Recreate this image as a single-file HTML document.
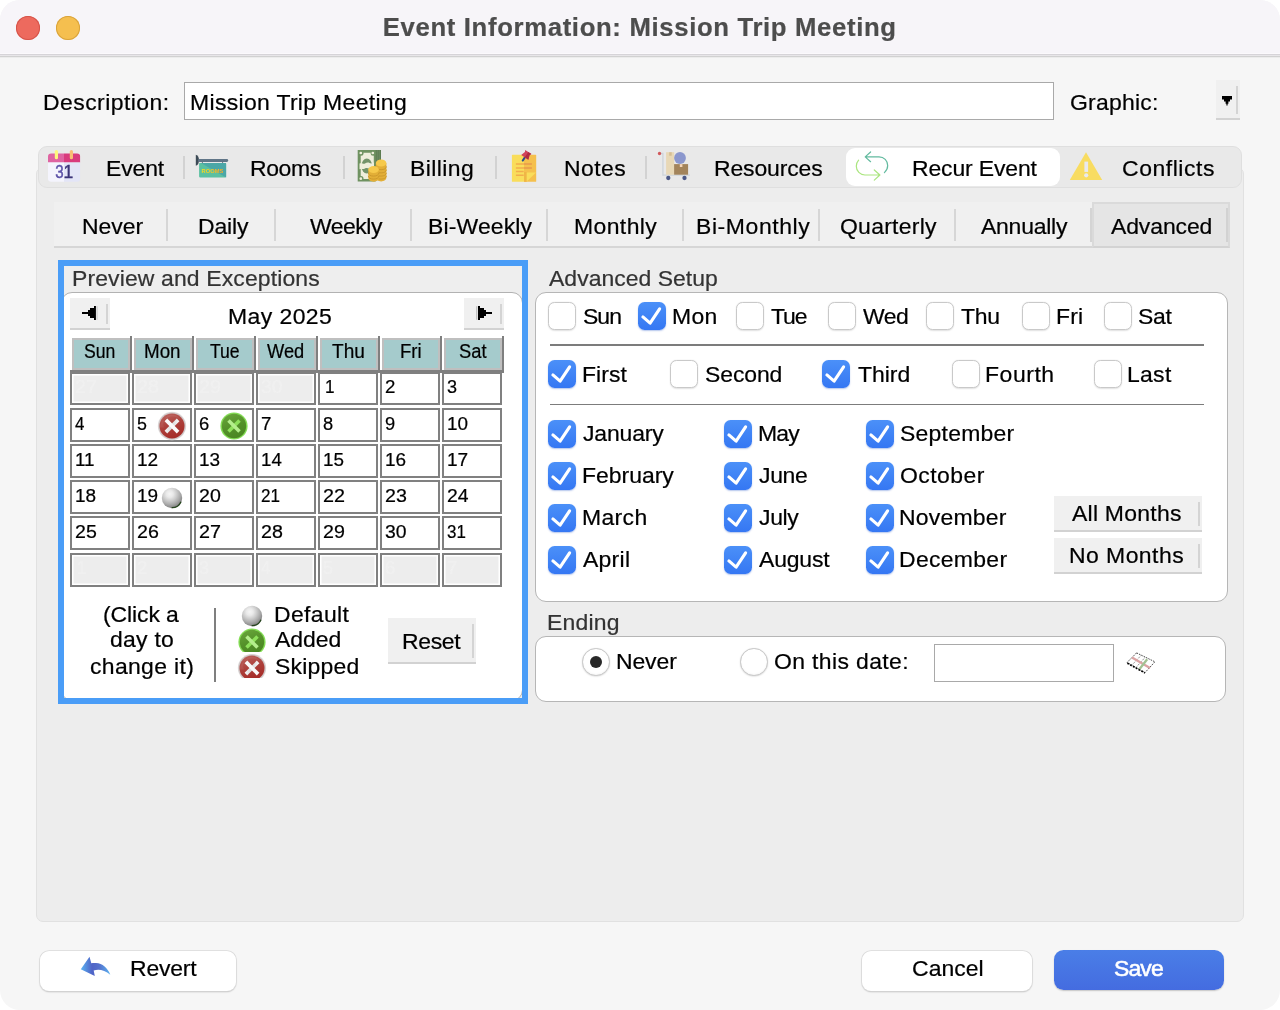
<!DOCTYPE html>
<html lang="en"><head><meta charset="utf-8"><title>Event Information: Mission Trip Meeting</title>
<style>
html,body{margin:0;padding:0;background:#fff;}
body{width:1280px;height:1010px;overflow:hidden;font-family:"Liberation Sans", sans-serif;}
#win{position:absolute;left:0;top:0;width:1280px;height:1010px;background:#f6f6f6;border-radius:20px;overflow:hidden;}
#win div,#win svg,#win span{position:absolute;}
#titlebar{left:0;top:0;width:1280px;height:58px;background:linear-gradient(#f7f5f9 0,#f7f5f9 53.5px,#fbf9fc 53.5px,#fbf9fc 54px,#d6d4d8 54px,#d6d4d8 55px,#e8e6e9 55px,#e8e6e9 56px,#d1d1d1 56px,#d1d1d1 57px,#ececec 57px,#ececec 58px);}
#txt{left:0;top:0;width:1280px;height:1010px;will-change:transform;}
.t{white-space:pre;line-height:1;color:#000;-webkit-text-stroke:0.22px currentColor;transform-origin:0 50%;}
.cb{width:27.5px;height:27.5px;box-sizing:border-box;border-radius:6.5px;background:#fff;border:1px solid #c9c9c9;box-shadow:0 0.5px 1.5px rgba(0,0,0,0.12);}
.cb.on{border:none;background:linear-gradient(#4b90f8,#3577f3);box-shadow:0 1px 1.5px rgba(40,90,200,0.35);}
.cb svg{left:0;top:0;}
.rb{width:27.6px;height:27.6px;box-sizing:border-box;border-radius:50%;background:#fff;border:1px solid #c6c6c6;box-shadow:0 0.5px 1.5px rgba(0,0,0,0.15), inset 0 -1px 2px rgba(0,0,0,0.04);}
.rb i{position:absolute;left:6.7px;top:6.8px;width:12.2px;height:12.2px;border-radius:50%;background:#282828;}
</style></head>
<body>
<div id="win">
<div id="titlebar"></div>
<div style="left:16px;top:16px;width:24.00px;height:24.00px;border-radius:50%;background:#ed6a5e;box-shadow:inset 0 0 0 1px #d5544a;"></div>
<div style="left:56px;top:16px;width:24.00px;height:24.00px;border-radius:50%;background:#f5bf4f;box-shadow:inset 0 0 0 1px #d9a33c;"></div>
<div style="left:184px;top:82px;width:870.00px;height:38.00px;background:#fff;border:1px solid #a9a9a9;box-sizing:border-box;"></div>
<div style="left:1216px;top:80px;width:24.00px;height:40.00px;background:#f0f0f0;border-bottom:2px solid #d2d2d2;box-sizing:border-box;"></div><div style="left:1236px;top:86px;width:2.00px;height:28.00px;background:#d4d4d4;"></div>
<div style="left:36px;top:167px;width:1207.50px;height:754.50px;background:#ededed;border:1px solid #e1e1e1;border-radius:7px;box-sizing:border-box;"></div>
<div style="left:38px;top:146px;width:1204.00px;height:41.50px;background:#e9e9e9;border:1px solid #dfdfdf;border-radius:9px;box-sizing:border-box;"></div>
<div style="left:846px;top:148px;width:214.00px;height:38.00px;background:#fff;border-radius:9px;"></div>
<div style="left:183.25px;top:155.5px;width:1.50px;height:23.00px;background:#d2d2d2;"></div>
<div style="left:343.25px;top:155.5px;width:1.50px;height:23.00px;background:#d2d2d2;"></div>
<div style="left:495.25px;top:155.5px;width:1.50px;height:23.00px;background:#d2d2d2;"></div>
<div style="left:645.25px;top:155.5px;width:1.50px;height:23.00px;background:#d2d2d2;"></div>
<div style="left:54px;top:201.5px;width:1176.00px;height:46.00px;background:#f0f0f0;border-bottom:2px solid #d6d6d6;box-sizing:border-box;"></div>
<div style="left:166.25px;top:208.5px;width:1.50px;height:32.50px;background:#d6d6d6;"></div>
<div style="left:274.25px;top:208.5px;width:1.50px;height:32.50px;background:#d6d6d6;"></div>
<div style="left:410.25px;top:208.5px;width:1.50px;height:32.50px;background:#d6d6d6;"></div>
<div style="left:546.25px;top:208.5px;width:1.50px;height:32.50px;background:#d6d6d6;"></div>
<div style="left:682.25px;top:208.5px;width:1.50px;height:32.50px;background:#d6d6d6;"></div>
<div style="left:818.25px;top:208.5px;width:1.50px;height:32.50px;background:#d6d6d6;"></div>
<div style="left:954.25px;top:208.5px;width:1.50px;height:32.50px;background:#d6d6d6;"></div>
<div style="left:1092.3px;top:202px;width:137.40px;height:45.60px;background:#e5e5e5;border:2px solid #dadada;border-bottom:2px solid #d3d3d3;box-sizing:border-box;"></div>
<div style="left:1090.2px;top:208.2px;width:2.00px;height:33.60px;background:#d4d4d4;"></div>
<div style="left:1226px;top:208.2px;width:2.00px;height:33.60px;background:#d2d2d2;"></div>
<div style="left:58px;top:260px;width:470.00px;height:444.00px;background:#eeeeee;"></div>
<div style="left:61px;top:292px;width:462.00px;height:408.50px;background:#fff;border:1px solid #b2b2b2;border-radius:11px;box-sizing:border-box;"></div>
<div style="left:58px;top:260px;width:470.00px;height:444.00px;border:6px solid #4a9df7;box-sizing:border-box;"></div>
<div style="left:70px;top:298px;width:40.00px;height:31.50px;background:#f0f0f0;border-bottom:2px solid #d2d2d2;box-sizing:border-box;"></div><div style="left:106px;top:304px;width:2.00px;height:19.50px;background:#d4d4d4;"></div>
<div style="left:464px;top:298px;width:40.00px;height:31.50px;background:#f0f0f0;border-bottom:2px solid #d2d2d2;box-sizing:border-box;"></div><div style="left:500px;top:304px;width:2.00px;height:19.50px;background:#d4d4d4;"></div>
<div style="left:72px;top:338px;width:58.00px;height:32.00px;background:#a5cbcc;border:2px solid #bfbfbf;box-sizing:border-box;"></div>
<div style="left:130px;top:336px;width:2.00px;height:35.00px;background:#7f7f7f;"></div>
<div style="left:134px;top:338px;width:58.00px;height:32.00px;background:#a5cbcc;border:2px solid #bfbfbf;box-sizing:border-box;"></div>
<div style="left:192px;top:336px;width:2.00px;height:35.00px;background:#7f7f7f;"></div>
<div style="left:196px;top:338px;width:58.00px;height:32.00px;background:#a5cbcc;border:2px solid #bfbfbf;box-sizing:border-box;"></div>
<div style="left:254px;top:336px;width:2.00px;height:35.00px;background:#7f7f7f;"></div>
<div style="left:258px;top:338px;width:58.00px;height:32.00px;background:#a5cbcc;border:2px solid #bfbfbf;box-sizing:border-box;"></div>
<div style="left:316px;top:336px;width:2.00px;height:35.00px;background:#7f7f7f;"></div>
<div style="left:320px;top:338px;width:58.00px;height:32.00px;background:#a5cbcc;border:2px solid #bfbfbf;box-sizing:border-box;"></div>
<div style="left:378px;top:336px;width:2.00px;height:35.00px;background:#7f7f7f;"></div>
<div style="left:382px;top:338px;width:58.00px;height:32.00px;background:#a5cbcc;border:2px solid #bfbfbf;box-sizing:border-box;"></div>
<div style="left:440px;top:336px;width:2.00px;height:35.00px;background:#7f7f7f;"></div>
<div style="left:444px;top:338px;width:58.00px;height:32.00px;background:#a5cbcc;border:2px solid #bfbfbf;box-sizing:border-box;"></div>
<div style="left:502px;top:336px;width:2.00px;height:35.00px;background:#7f7f7f;"></div>
<div style="left:70.3px;top:370px;width:433.70px;height:2.50px;background:#7f7f7f;"></div>
<div style="left:70.3px;top:371.8px;width:59.60px;height:33.60px;background:#ededed;border:2px solid #808080;box-shadow:inset 0 0 0 1.5px #fff;box-sizing:border-box;"></div>
<div style="left:132.3px;top:371.8px;width:59.60px;height:33.60px;background:#ededed;border:2px solid #808080;box-shadow:inset 0 0 0 1.5px #fff;box-sizing:border-box;"></div>
<div style="left:194.3px;top:371.8px;width:59.60px;height:33.60px;background:#ededed;border:2px solid #808080;box-shadow:inset 0 0 0 1.5px #fff;box-sizing:border-box;"></div>
<div style="left:256.3px;top:371.8px;width:59.60px;height:33.60px;background:#ededed;border:2px solid #808080;box-shadow:inset 0 0 0 1.5px #fff;box-sizing:border-box;"></div>
<div style="left:318.3px;top:371.8px;width:59.60px;height:33.60px;background:#fff;border:2px solid #808080;box-sizing:border-box;"></div>
<div style="left:380.3px;top:371.8px;width:59.60px;height:33.60px;background:#fff;border:2px solid #808080;box-sizing:border-box;"></div>
<div style="left:442.3px;top:371.8px;width:59.60px;height:33.60px;background:#fff;border:2px solid #808080;box-sizing:border-box;"></div>
<div style="left:70.3px;top:408.2px;width:59.60px;height:33.60px;background:#fff;border:2px solid #808080;box-sizing:border-box;"></div>
<div style="left:132.3px;top:408.2px;width:59.60px;height:33.60px;background:#fff;border:2px solid #808080;box-sizing:border-box;"></div>
<div style="left:194.3px;top:408.2px;width:59.60px;height:33.60px;background:#fff;border:2px solid #808080;box-sizing:border-box;"></div>
<div style="left:256.3px;top:408.2px;width:59.60px;height:33.60px;background:#fff;border:2px solid #808080;box-sizing:border-box;"></div>
<div style="left:318.3px;top:408.2px;width:59.60px;height:33.60px;background:#fff;border:2px solid #808080;box-sizing:border-box;"></div>
<div style="left:380.3px;top:408.2px;width:59.60px;height:33.60px;background:#fff;border:2px solid #808080;box-sizing:border-box;"></div>
<div style="left:442.3px;top:408.2px;width:59.60px;height:33.60px;background:#fff;border:2px solid #808080;box-sizing:border-box;"></div>
<div style="left:70.3px;top:444.2px;width:59.60px;height:33.60px;background:#fff;border:2px solid #808080;box-sizing:border-box;"></div>
<div style="left:132.3px;top:444.2px;width:59.60px;height:33.60px;background:#fff;border:2px solid #808080;box-sizing:border-box;"></div>
<div style="left:194.3px;top:444.2px;width:59.60px;height:33.60px;background:#fff;border:2px solid #808080;box-sizing:border-box;"></div>
<div style="left:256.3px;top:444.2px;width:59.60px;height:33.60px;background:#fff;border:2px solid #808080;box-sizing:border-box;"></div>
<div style="left:318.3px;top:444.2px;width:59.60px;height:33.60px;background:#fff;border:2px solid #808080;box-sizing:border-box;"></div>
<div style="left:380.3px;top:444.2px;width:59.60px;height:33.60px;background:#fff;border:2px solid #808080;box-sizing:border-box;"></div>
<div style="left:442.3px;top:444.2px;width:59.60px;height:33.60px;background:#fff;border:2px solid #808080;box-sizing:border-box;"></div>
<div style="left:70.3px;top:480.3px;width:59.60px;height:33.60px;background:#fff;border:2px solid #808080;box-sizing:border-box;"></div>
<div style="left:132.3px;top:480.3px;width:59.60px;height:33.60px;background:#fff;border:2px solid #808080;box-sizing:border-box;"></div>
<div style="left:194.3px;top:480.3px;width:59.60px;height:33.60px;background:#fff;border:2px solid #808080;box-sizing:border-box;"></div>
<div style="left:256.3px;top:480.3px;width:59.60px;height:33.60px;background:#fff;border:2px solid #808080;box-sizing:border-box;"></div>
<div style="left:318.3px;top:480.3px;width:59.60px;height:33.60px;background:#fff;border:2px solid #808080;box-sizing:border-box;"></div>
<div style="left:380.3px;top:480.3px;width:59.60px;height:33.60px;background:#fff;border:2px solid #808080;box-sizing:border-box;"></div>
<div style="left:442.3px;top:480.3px;width:59.60px;height:33.60px;background:#fff;border:2px solid #808080;box-sizing:border-box;"></div>
<div style="left:70.3px;top:516.3px;width:59.60px;height:33.60px;background:#fff;border:2px solid #808080;box-sizing:border-box;"></div>
<div style="left:132.3px;top:516.3px;width:59.60px;height:33.60px;background:#fff;border:2px solid #808080;box-sizing:border-box;"></div>
<div style="left:194.3px;top:516.3px;width:59.60px;height:33.60px;background:#fff;border:2px solid #808080;box-sizing:border-box;"></div>
<div style="left:256.3px;top:516.3px;width:59.60px;height:33.60px;background:#fff;border:2px solid #808080;box-sizing:border-box;"></div>
<div style="left:318.3px;top:516.3px;width:59.60px;height:33.60px;background:#fff;border:2px solid #808080;box-sizing:border-box;"></div>
<div style="left:380.3px;top:516.3px;width:59.60px;height:33.60px;background:#fff;border:2px solid #808080;box-sizing:border-box;"></div>
<div style="left:442.3px;top:516.3px;width:59.60px;height:33.60px;background:#fff;border:2px solid #808080;box-sizing:border-box;"></div>
<div style="left:70.3px;top:552.6px;width:59.60px;height:34.60px;background:#ededed;border:2px solid #808080;box-shadow:inset 0 0 0 1.5px #fff;box-sizing:border-box;"></div>
<div style="left:132.3px;top:552.6px;width:59.60px;height:34.60px;background:#ededed;border:2px solid #808080;box-shadow:inset 0 0 0 1.5px #fff;box-sizing:border-box;"></div>
<div style="left:194.3px;top:552.6px;width:59.60px;height:34.60px;background:#ededed;border:2px solid #808080;box-shadow:inset 0 0 0 1.5px #fff;box-sizing:border-box;"></div>
<div style="left:256.3px;top:552.6px;width:59.60px;height:34.60px;background:#ededed;border:2px solid #808080;box-shadow:inset 0 0 0 1.5px #fff;box-sizing:border-box;"></div>
<div style="left:318.3px;top:552.6px;width:59.60px;height:34.60px;background:#ededed;border:2px solid #808080;box-shadow:inset 0 0 0 1.5px #fff;box-sizing:border-box;"></div>
<div style="left:380.3px;top:552.6px;width:59.60px;height:34.60px;background:#ededed;border:2px solid #808080;box-shadow:inset 0 0 0 1.5px #fff;box-sizing:border-box;"></div>
<div style="left:442.3px;top:552.6px;width:59.60px;height:34.60px;background:#ededed;border:2px solid #808080;box-shadow:inset 0 0 0 1.5px #fff;box-sizing:border-box;"></div>
<svg style="left:157.30px;top:411.30px;" width="30" height="30" viewBox="-15 -15 30 30"><defs><linearGradient id="rg1" x1="0.2" y1="0" x2="0.6" y2="1"><stop offset="0" stop-color="#bb625d"/><stop offset="0.5" stop-color="#ac3f3a"/><stop offset="1" stop-color="#a62b27"/></linearGradient><linearGradient id="rx1" x1="0" y1="0" x2="1" y2="0"><stop offset="0" stop-color="#f2f2f2"/><stop offset="0.5" stop-color="#d6d6d6"/><stop offset="1" stop-color="#f6f6f6"/></linearGradient></defs><circle r="14.200" fill="#e4e0e0"/><circle r="13.600" fill="#cdc5c5"/><circle r="12.5" fill="url(#rg1)"/><path d="M-8 1.500A8 8 0 0 1 8.500 -6A12.5 12.500 0 0 0 -12.400 1.500Z" fill="#fff" opacity="0.060"/><path d="M6.100 -6.100L-6.100 6.100" stroke="url(#rx1)" stroke-width="3.700" fill="none"/><path d="M-6.100 -6.100L6.100 6.100" stroke="#fafafa" stroke-width="3.700" fill="none"/></svg>
<svg style="left:218.90px;top:410.80px;" width="30" height="30" viewBox="-15 -15 30 30"><defs><linearGradient id="gg2" x1="0.2" y1="0" x2="0.6" y2="1"><stop offset="0" stop-color="#68a53a"/><stop offset="0.55" stop-color="#539029"/><stop offset="1" stop-color="#4a8722"/></linearGradient></defs><circle r="13.600" fill="#84dd55"/><circle r="12.200" fill="url(#gg2)"/><path d="M5.500 -5.500L-5.500 5.500" stroke="#8ee05b" stroke-width="3.500" fill="none"/><path d="M-5.500 -5.500L5.500 5.500" stroke="#b4ee8c" stroke-width="3.500" fill="none"/></svg>
<svg style="left:156.55px;top:483.15px;" width="30" height="30" viewBox="-15 -15 30 30"><defs><radialGradient id="dg3" cx="0.390" cy="0.300" r="0.680"><stop offset="0" stop-color="#f5f5f5"/><stop offset="0.250" stop-color="#e9e9e9"/><stop offset="0.500" stop-color="#cccccc"/><stop offset="0.750" stop-color="#acacac"/><stop offset="0.920" stop-color="#929292"/><stop offset="1" stop-color="#7e7e7e"/></radialGradient></defs><circle r="10.200" fill="url(#dg3)"/><path d="M9 3.800A9.700 9.700 0 0 1 -0.300 9.700" stroke="#1b3d12" stroke-width="1.300" fill="none" opacity="0.900"/></svg>
<div style="left:214px;top:608.4px;width:2.00px;height:73.20px;background:#7f7f7f;"></div>
<svg style="left:236.50px;top:601.00px;" width="30" height="30" viewBox="-15 -15 30 30"><defs><radialGradient id="dg4" cx="0.390" cy="0.300" r="0.680"><stop offset="0" stop-color="#f5f5f5"/><stop offset="0.250" stop-color="#e9e9e9"/><stop offset="0.500" stop-color="#cccccc"/><stop offset="0.750" stop-color="#acacac"/><stop offset="0.920" stop-color="#929292"/><stop offset="1" stop-color="#7e7e7e"/></radialGradient></defs><circle r="10.200" fill="url(#dg4)"/><path d="M9 3.800A9.700 9.700 0 0 1 -0.300 9.700" stroke="#1b3d12" stroke-width="1.300" fill="none" opacity="0.900"/></svg>
<svg style="left:237.00px;top:626.60px;clip-path:inset(1.40px 0 4.60px 0);" width="30" height="30" viewBox="-15 -15 30 30"><defs><linearGradient id="gg5" x1="0.2" y1="0" x2="0.6" y2="1"><stop offset="0" stop-color="#68a53a"/><stop offset="0.55" stop-color="#539029"/><stop offset="1" stop-color="#4a8722"/></linearGradient></defs><circle r="13.600" fill="#84dd55"/><circle r="12.200" fill="url(#gg5)"/><path d="M5.500 -5.500L-5.500 5.500" stroke="#8ee05b" stroke-width="3.500" fill="none"/><path d="M-5.500 -5.500L5.500 5.500" stroke="#b4ee8c" stroke-width="3.500" fill="none"/></svg>
<svg style="left:237.00px;top:652.80px;clip-path:inset(1.20px 0 4.80px 0);" width="30" height="30" viewBox="-15 -15 30 30"><defs><linearGradient id="rg6" x1="0.2" y1="0" x2="0.6" y2="1"><stop offset="0" stop-color="#bb625d"/><stop offset="0.5" stop-color="#ac3f3a"/><stop offset="1" stop-color="#a62b27"/></linearGradient><linearGradient id="rx6" x1="0" y1="0" x2="1" y2="0"><stop offset="0" stop-color="#f2f2f2"/><stop offset="0.5" stop-color="#d6d6d6"/><stop offset="1" stop-color="#f6f6f6"/></linearGradient></defs><circle r="14.200" fill="#e4e0e0"/><circle r="13.600" fill="#cdc5c5"/><circle r="12.5" fill="url(#rg6)"/><path d="M-8 1.500A8 8 0 0 1 8.500 -6A12.5 12.500 0 0 0 -12.400 1.500Z" fill="#fff" opacity="0.060"/><path d="M6.100 -6.100L-6.100 6.100" stroke="url(#rx6)" stroke-width="3.700" fill="none"/><path d="M-6.100 -6.100L6.100 6.100" stroke="#fafafa" stroke-width="3.700" fill="none"/></svg>
<div style="left:388px;top:618.4px;width:88.00px;height:45.40px;background:#f0f0f0;border-bottom:2px solid #d2d2d2;box-sizing:border-box;"></div><div style="left:472px;top:624.4px;width:2.00px;height:33.40px;background:#d4d4d4;"></div>
<div style="left:534.5px;top:292px;width:693.00px;height:310.00px;background:#fff;border:1px solid #b6b6b6;border-radius:11px;box-sizing:border-box;"></div>
<div style="left:534.5px;top:636.3px;width:691.50px;height:65.70px;background:#fff;border:1px solid #b6b6b6;border-radius:11px;box-sizing:border-box;"></div>
<div style="left:550px;top:344.2px;width:654.00px;height:1.80px;background:#7c7c7c;"></div>
<div style="left:550px;top:403.7px;width:654.00px;height:1.80px;background:#7c7c7c;"></div>
<div class="cb" style="left:548.3px;top:302px"></div>
<div class="cb on" style="left:638.2px;top:302px"><svg width="27.5" height="27.5" viewBox="0 0 27.5 27.5"><path d="M4.9 14.9L12.1 21.2L21.6 6.9" stroke="#fff" stroke-width="3.1" fill="none" stroke-linecap="round" stroke-linejoin="round"/></svg></div>
<div class="cb" style="left:736px;top:302px"></div>
<div class="cb" style="left:828.2px;top:302px"></div>
<div class="cb" style="left:926px;top:302px"></div>
<div class="cb" style="left:1022px;top:302px"></div>
<div class="cb" style="left:1104px;top:302px"></div>
<div class="cb on" style="left:548.3px;top:360px"><svg width="27.5" height="27.5" viewBox="0 0 27.5 27.5"><path d="M4.9 14.9L12.1 21.2L21.6 6.9" stroke="#fff" stroke-width="3.1" fill="none" stroke-linecap="round" stroke-linejoin="round"/></svg></div>
<div class="cb" style="left:670px;top:360px"></div>
<div class="cb on" style="left:822px;top:360px"><svg width="27.5" height="27.5" viewBox="0 0 27.5 27.5"><path d="M4.9 14.9L12.1 21.2L21.6 6.9" stroke="#fff" stroke-width="3.1" fill="none" stroke-linecap="round" stroke-linejoin="round"/></svg></div>
<div class="cb" style="left:952.2px;top:360px"></div>
<div class="cb" style="left:1094px;top:360px"></div>
<div class="cb on" style="left:548.3px;top:420px"><svg width="27.5" height="27.5" viewBox="0 0 27.5 27.5"><path d="M4.9 14.9L12.1 21.2L21.6 6.9" stroke="#fff" stroke-width="3.1" fill="none" stroke-linecap="round" stroke-linejoin="round"/></svg></div>
<div class="cb on" style="left:724.2px;top:420px"><svg width="27.5" height="27.5" viewBox="0 0 27.5 27.5"><path d="M4.9 14.9L12.1 21.2L21.6 6.9" stroke="#fff" stroke-width="3.1" fill="none" stroke-linecap="round" stroke-linejoin="round"/></svg></div>
<div class="cb on" style="left:866px;top:420px"><svg width="27.5" height="27.5" viewBox="0 0 27.5 27.5"><path d="M4.9 14.9L12.1 21.2L21.6 6.9" stroke="#fff" stroke-width="3.1" fill="none" stroke-linecap="round" stroke-linejoin="round"/></svg></div>
<div class="cb on" style="left:548.3px;top:462px"><svg width="27.5" height="27.5" viewBox="0 0 27.5 27.5"><path d="M4.9 14.9L12.1 21.2L21.6 6.9" stroke="#fff" stroke-width="3.1" fill="none" stroke-linecap="round" stroke-linejoin="round"/></svg></div>
<div class="cb on" style="left:724.2px;top:462px"><svg width="27.5" height="27.5" viewBox="0 0 27.5 27.5"><path d="M4.9 14.9L12.1 21.2L21.6 6.9" stroke="#fff" stroke-width="3.1" fill="none" stroke-linecap="round" stroke-linejoin="round"/></svg></div>
<div class="cb on" style="left:866px;top:462px"><svg width="27.5" height="27.5" viewBox="0 0 27.5 27.5"><path d="M4.9 14.9L12.1 21.2L21.6 6.9" stroke="#fff" stroke-width="3.1" fill="none" stroke-linecap="round" stroke-linejoin="round"/></svg></div>
<div class="cb on" style="left:548.3px;top:504px"><svg width="27.5" height="27.5" viewBox="0 0 27.5 27.5"><path d="M4.9 14.9L12.1 21.2L21.6 6.9" stroke="#fff" stroke-width="3.1" fill="none" stroke-linecap="round" stroke-linejoin="round"/></svg></div>
<div class="cb on" style="left:724.2px;top:504px"><svg width="27.5" height="27.5" viewBox="0 0 27.5 27.5"><path d="M4.9 14.9L12.1 21.2L21.6 6.9" stroke="#fff" stroke-width="3.1" fill="none" stroke-linecap="round" stroke-linejoin="round"/></svg></div>
<div class="cb on" style="left:866px;top:504px"><svg width="27.5" height="27.5" viewBox="0 0 27.5 27.5"><path d="M4.9 14.9L12.1 21.2L21.6 6.9" stroke="#fff" stroke-width="3.1" fill="none" stroke-linecap="round" stroke-linejoin="round"/></svg></div>
<div class="cb on" style="left:548.3px;top:546px"><svg width="27.5" height="27.5" viewBox="0 0 27.5 27.5"><path d="M4.9 14.9L12.1 21.2L21.6 6.9" stroke="#fff" stroke-width="3.1" fill="none" stroke-linecap="round" stroke-linejoin="round"/></svg></div>
<div class="cb on" style="left:724.2px;top:546px"><svg width="27.5" height="27.5" viewBox="0 0 27.5 27.5"><path d="M4.9 14.9L12.1 21.2L21.6 6.9" stroke="#fff" stroke-width="3.1" fill="none" stroke-linecap="round" stroke-linejoin="round"/></svg></div>
<div class="cb on" style="left:866px;top:546px"><svg width="27.5" height="27.5" viewBox="0 0 27.5 27.5"><path d="M4.9 14.9L12.1 21.2L21.6 6.9" stroke="#fff" stroke-width="3.1" fill="none" stroke-linecap="round" stroke-linejoin="round"/></svg></div>
<div style="left:1054px;top:496.3px;width:148.00px;height:35.50px;background:#f0f0f0;border-bottom:2px solid #d2d2d2;box-sizing:border-box;"></div><div style="left:1198px;top:502.3px;width:2.00px;height:23.50px;background:#d4d4d4;"></div>
<div style="left:1054px;top:538.3px;width:148.00px;height:35.50px;background:#f0f0f0;border-bottom:2px solid #d2d2d2;box-sizing:border-box;"></div><div style="left:1198px;top:544.3px;width:2.00px;height:23.50px;background:#d4d4d4;"></div>
<div class="rb" style="left:582.2px;top:648.2px"><i></i></div>
<div class="rb" style="left:740.2px;top:648.2px"></div>
<div style="left:934px;top:644px;width:180.00px;height:38.00px;background:#fff;border:1px solid #a9a9a9;box-sizing:border-box;"></div>
<div style="left:39.8px;top:950.6px;width:196.40px;height:40.40px;background:#fff;border-radius:9px;box-shadow:0 0 0 0.8px #dadada, 0 1px 1.5px rgba(0,0,0,0.3);"></div>
<div style="left:862px;top:950.6px;width:170.00px;height:40.40px;background:#fff;border-radius:9px;box-shadow:0 0 0 0.8px #dadada, 0 1px 1.5px rgba(0,0,0,0.3);"></div>
<div style="left:1053.8px;top:949.8px;width:170.20px;height:40.50px;background:linear-gradient(#4a7ee7,#446ce0);border-radius:9.5px;box-shadow:0 1px 1.5px rgba(0,0,0,0.2);"></div>
<svg style="left:0;top:0;will-change:transform" width="1280" height="1010" viewBox="0 0 1280 1010">
<defs>
<linearGradient id="rv" x1="0" y1="0" x2="1" y2="0"><stop offset="0" stop-color="#5bb4f3"/><stop offset="0.38" stop-color="#4f63c6"/><stop offset="0.62" stop-color="#5470cc"/><stop offset="1" stop-color="#5cb2f0"/></linearGradient>
<linearGradient id="rm" x1="0" y1="0" x2="1" y2="0"><stop offset="0" stop-color="#f7dc1e"/><stop offset="1" stop-color="#f5a928"/></linearGradient>
<clipPath id="calclip"><rect x="48" y="153.4" width="32.2" height="28.4" rx="3.2"/></clipPath>
</defs>
<!-- Event: calendar -->
<g clip-path="url(#calclip)">
<rect x="48" y="153" width="16" height="9.6" fill="#df64a1"/><rect x="64" y="153" width="16.4" height="9.6" fill="#d93b7d"/>
<rect x="48" y="162.4" width="16" height="20" fill="#f4f4fd"/><rect x="64" y="162.4" width="16.4" height="20" fill="#e3e5f7"/>
</g>
<rect x="54.8" y="150" width="3.2" height="9.3" rx="1.6" fill="#fdf77d"/>
<rect x="69.8" y="150" width="3.2" height="9.3" rx="1.6" fill="#f9bd73"/>
<text x="55.2" y="178" font-family="'Liberation Sans', sans-serif" font-size="17.5" fill="#5d53a9" stroke="#5d53a9" stroke-width="0.45" textLength="8.4" lengthAdjust="spacingAndGlyphs">3</text>
<text x="63.400" y="178" font-family="'Liberation Sans', sans-serif" font-size="17.5" fill="#3d3579" stroke="#3d3579" stroke-width="0.45">1</text>
<!-- Rooms sign -->
<path d="M195.8 154.8 C198.2 155.4 199 158 199 160.3 C199 162.6 198.2 165.2 195.8 165.8 Z" fill="#3d4a55"/>
<rect x="198" y="159" width="30.2" height="2.9" rx="1.4" fill="#607587"/>
<path d="M202.4 161.8v2.8M222.6 161.8v2.8" stroke="#5a6b78" stroke-width="0.9" fill="none"/>
<rect x="199.1" y="163" width="27" height="14.4" rx="0.8" fill="#5bc0a1"/>
<path d="M201 163h24.3a0.8 0.8 0 0 1 0.8 0.8v13.6z" fill="#4ba7a7"/>
<text x="201.6" y="173.1" font-family="'Liberation Sans', sans-serif" font-size="5.7" font-weight="bold" fill="url(#rm)" textLength="21.8" lengthAdjust="spacing">ROOMS</text>
<!-- Billing -->
<rect x="375" y="150" width="6" height="28" fill="#5c7b50"/>
<path d="M377.2 150v14M379.2 150v12" stroke="#87a07a" stroke-width="0.5"/>
<rect x="357.7" y="150" width="18" height="31.5" fill="#6f9261"/>
<rect x="360.7" y="152.8" width="13.1" height="26.2" rx="2" fill="#eeeedc"/>
<circle cx="361" cy="153.200" r="2.500" fill="#6f9261"/><circle cx="373.200" cy="153.200" r="2.500" fill="#6f9261"/><circle cx="361" cy="178.600" r="2.500" fill="#6f9261"/>
<circle cx="360.800" cy="153" r="1.350" fill="#eeeedc"/><circle cx="372.800" cy="153" r="1.350" fill="#eeeedc"/><circle cx="360.800" cy="178.700" r="1.350" fill="#eeeedc"/>
<ellipse cx="366.8" cy="166" rx="5.4" ry="7.6" fill="#73936a"/>
<path d="M359.5 163.5c2.5 -1 4 1 5.5 0s3 -1.500 4.500 -0.600 3 0.400 4.500 -0.300v5.400c-1.500 0.700 -3 1.500 -4.500 0.800s-3 -1.400 -4.500 -0.400 -3.500 0.200 -5.500 0.800z" fill="#eeeedc"/>
<g>
<path d="M375.800 163v14.600c0 2.200 2.400 3.900 5.300 3.900s5.300 -1.700 5.300 -3.900v-14.600z" fill="#e3af37"/>
<path d="M375.800 166.400c0 2.200 2.400 3.300 5.300 3.300s5.300 -1.100 5.300 -3.300M375.800 169.600c0 2.200 2.400 3.300 5.300 3.300s5.300 -1.100 5.300 -3.300M375.800 172.800c0 2.200 2.400 3.300 5.300 3.300s5.300 -1.100 5.300 -3.300M375.800 175.800c0 2.200 2.400 3.300 5.300 3.300s5.300 -1.100 5.300 -3.300" stroke="#cb962a" stroke-width="0.900" fill="none"/>
<ellipse cx="381.100" cy="163" rx="5.300" ry="3.500" fill="#f6c94b"/>
<path d="M368.300 169.600v8.200c0 2.200 2.400 3.900 5.300 3.900s5.300 -1.700 5.300 -3.900v-8.200z" fill="#e3af37"/>
<path d="M368.300 172.800c0 2.200 2.400 3.300 5.300 3.300s5.300 -1.100 5.300 -3.300M368.300 175.800c0 2.200 2.400 3.300 5.300 3.300s5.300 -1.100 5.300 -3.300" stroke="#cb962a" stroke-width="0.900" fill="none"/>
<ellipse cx="373.600" cy="169.600" rx="5.300" ry="3.500" fill="#f6c94b"/>
</g>
<!-- Notes -->
<rect x="511.900" y="154.800" width="12.200" height="27" rx="0.6" fill="#f9dd5b"/>
<rect x="524" y="154.800" width="12.200" height="27" rx="0.600" fill="#f5c04d"/>
<rect x="524" y="172" width="2.800" height="9.800" fill="#f0b646"/>
<path d="M526.700 172.600h9.300l-9.300 9z" fill="#f9dd5b"/>
<path d="M515.900 164h8.100M515.900 167.900h8.100M515.900 171.400h7.800M515.900 175.200h7.800" stroke="#f2ad4c" stroke-width="1.500"/>
<path d="M524 164h7.900M524 167.900h7.900" stroke="#e7994b" stroke-width="1.500"/>
<path d="M524.700 157.600l-2 3" stroke="#2b4b8b" stroke-width="1.900" stroke-linecap="round"/>
<g transform="translate(526.300 155) rotate(33) scale(0.880) translate(-526 -154.600)">
<path d="M521.800 150.400h8.400l-1 2.200 1.600 5.200h-9.600l1.600 -5.200z" fill="#d0435a"/>
<path d="M526 150.400h4.200l-1 2.200 1.600 5.200h-4.800z" fill="#b12b40"/>
</g>
<!-- Resources -->
<path d="M660.500 153.500h2.400v21.700h27" stroke="#cdd3da" stroke-width="1.300" fill="none"/>
<circle cx="659.500" cy="153.500" r="1.650" fill="#d1585b"/>
<rect x="666.100" y="152.200" width="8.100" height="22.500" fill="#e8d8b6"/>
<rect x="669.200" y="152.200" width="2.500" height="3.500" fill="#d5be93"/>
<rect x="674.100" y="164.100" width="14" height="10.600" fill="#a3845b"/>
<rect x="679.800" y="164.100" width="2.600" height="2.900" fill="#f6d6b9"/>
<circle cx="680" cy="158" r="5.900" fill="#8b97cd"/>
<circle cx="668.300" cy="178" r="2.150" fill="#4b5886"/><circle cx="684.500" cy="178" r="2.150" fill="#4b5886"/>
<!-- Recur -->
<path d="M870.600 152l-5.400 4.900 5.400 4.800M865.400 156.900h13.600c5 0 8.700 3.900 8.700 8.700 0 2.800 -1.200 5.200 -3.300 7" stroke="#62ba9f" stroke-width="1.200" fill="none" stroke-linecap="round" stroke-linejoin="round"/>
<path d="M874.300 170l5.600 5 -5.600 5.100M879.700 175h-14.700c-4.900 0 -8.700 -3.900 -8.700 -8.700 0 -2.300 0.800 -4.400 2.300 -6.100" stroke="#aae57f" stroke-width="1.200" fill="none" stroke-linecap="round" stroke-linejoin="round"/>
<!-- Conflicts -->
<path d="M1086 152.200l16.200 27.700h-32.400z" fill="#f8dc61"/>
<rect x="1084.400" y="161.600" width="3.700" height="10.300" fill="#e9e9ee"/>
<circle cx="1086.200" cy="175.300" r="2.100" fill="#e9e9ee"/>
<!-- pixel arrows -->
<path d="M82 312H88V310H90V308H94V306H96V320H94V318H90V316H88V314H82Z" fill="#000"/>
<path d="M96.300 306.200v13.600M97.500 306.200v13.600" stroke="#c4c4c4" stroke-width="0.500"/>
<path d="M478 306H480V308H484V310H486V312H492V314H486V316H484V318H480V320H478Z" fill="#000"/>
<path d="M476.700 306.200v13.600" stroke="#bdbdbd" stroke-width="1.200"/>
<path d="M1222 96H1232V99.500H1230V101.500H1228.400V103.700H1227.600V105.600H1226.400V103.700H1225.600V101.500H1224V99.500H1222Z" fill="#000"/>
<!-- Revert -->
<path d="M89.500 956.700L80.800 969.300 94.800 976 93.700 970.500C98.500 968.800 104.500 969.800 110.300 974.700 107.800 968.200 102.500 963.200 96 963 94.200 962.900 92.600 963 91.300 963.200Z" fill="url(#rv)"/>
<!-- calendar picker -->
<path d="M1136.600 652.900L1154.900 661.800 1145 672.600 1127 662.500Z" fill="#fff" stroke="#3a3a3a" stroke-width="0.900" stroke-dasharray="1.600 1"/>
<path d="M1127.400 663.200L1145 673" stroke="#000" stroke-width="1.700" stroke-dasharray="1.800 1.400"/>
<path d="M1141 655.500l-9.500 10M1145 657.500l-9.500 10.500" stroke="#555" stroke-width="0.700" stroke-dasharray="1.200 1"/>
<path d="M1132 657.600L1150 668" stroke="#dba3a3" stroke-width="2.300"/>
<path d="M1147.200 659.200L1139.600 669" stroke="#a3c293" stroke-width="2.300"/>
</svg>

<div id="txt">
<span class="t" id="t0" style="left:382.74px;top:15.00px;font-size:25.7px;letter-spacing:0.663px;font-weight:bold;color:#4d4d4d;">Event Information: Mission Trip Meeting</span>
<span class="t" id="t1" style="left:42.51px;top:92.00px;font-size:22.4px;transform:scaleX(1.025);letter-spacing:0.439px;">Description:</span>
<span class="t" id="t2" style="left:189.75px;top:92.00px;font-size:22.4px;transform:scaleX(1.025);letter-spacing:0.322px;">Mission Trip Meeting</span>
<span class="t" id="t3" style="left:1070.17px;top:92.00px;font-size:22.4px;transform:scaleX(1.025);letter-spacing:0.241px;">Graphic:</span>
<span class="t" id="t4" style="left:105.75px;top:158.00px;font-size:22.4px;transform:scaleX(1.025);letter-spacing:-0.120px;">Event</span>
<span class="t" id="t5" style="left:249.75px;top:158.00px;font-size:22.4px;transform:scaleX(1.025);letter-spacing:-0.381px;">Rooms</span>
<span class="t" id="t6" style="left:409.75px;top:158.00px;font-size:22.4px;transform:scaleX(1.025);letter-spacing:0.403px;">Billing</span>
<span class="t" id="t7" style="left:563.75px;top:158.00px;font-size:22.4px;transform:scaleX(1.025);letter-spacing:0.411px;">Notes</span>
<span class="t" id="t8" style="left:713.75px;top:158.00px;font-size:22.4px;transform:scaleX(1.025);letter-spacing:-0.132px;">Resources</span>
<span class="t" id="t9" style="left:911.75px;top:158.00px;font-size:22.4px;transform:scaleX(1.025);letter-spacing:-0.133px;">Recur Event</span>
<span class="t" id="t10" style="left:1122.47px;top:158.00px;font-size:22.4px;transform:scaleX(1.025);letter-spacing:0.538px;">Conflicts</span>
<span class="t" id="t11" style="left:81.75px;top:216.00px;font-size:22.4px;transform:scaleX(1.025);letter-spacing:-0.008px;">Never</span>
<span class="t" id="t12" style="left:197.75px;top:216.00px;font-size:22.4px;transform:scaleX(1.025);letter-spacing:-0.107px;">Daily</span>
<span class="t" id="t13" style="left:309.60px;top:216.00px;font-size:22.4px;transform:scaleX(1.025);letter-spacing:-0.460px;">Weekly</span>
<span class="t" id="t14" style="left:427.50px;top:216.00px;font-size:22.4px;transform:scaleX(1.025);letter-spacing:0.144px;">Bi-Weekly</span>
<span class="t" id="t15" style="left:573.75px;top:216.00px;font-size:22.4px;transform:scaleX(1.025);letter-spacing:0.399px;">Monthly</span>
<span class="t" id="t16" style="left:695.75px;top:216.00px;font-size:22.4px;transform:scaleX(1.025);letter-spacing:0.584px;">Bi-Monthly</span>
<span class="t" id="t17" style="left:840.08px;top:216.00px;font-size:22.4px;transform:scaleX(1.025);letter-spacing:0.257px;">Quarterly</span>
<span class="t" id="t18" style="left:981.05px;top:216.00px;font-size:22.4px;transform:scaleX(1.025);letter-spacing:-0.219px;">Annually</span>
<span class="t" id="t19" style="left:1110.80px;top:216.00px;font-size:22.4px;transform:scaleX(1.025);letter-spacing:-0.102px;">Advanced</span>
<span class="t" id="t20" style="left:71.66px;top:268.00px;font-size:22.4px;transform:scaleX(1.025);letter-spacing:0.127px;color:#333;">Preview and Exceptions</span>
<span class="t" id="t21" style="left:548.80px;top:268.00px;font-size:22.4px;transform:scaleX(1.025);letter-spacing:0.028px;color:#333;">Advanced Setup</span>
<span class="t" id="t22" style="left:547.36px;top:612.00px;font-size:22.4px;transform:scaleX(1.025);letter-spacing:0.204px;color:#333;">Ending</span>
<span class="t" id="t23" style="left:227.66px;top:306.00px;font-size:22.4px;transform:scaleX(1.025);letter-spacing:0.417px;">May 2025</span>
<span class="t" id="t24" style="left:84.38px;top:342.00px;font-size:19.5px;transform:scaleX(0.9035);">Sun</span>
<span class="t" id="t25" style="left:143.76px;top:342.00px;font-size:19.5px;transform:scaleX(0.9633);">Mon</span>
<span class="t" id="t26" style="left:209.94px;top:342.00px;font-size:19.5px;transform:scaleX(0.901);">Tue</span>
<span class="t" id="t27" style="left:267.20px;top:342.00px;font-size:19.5px;transform:scaleX(0.9377);">Wed</span>
<span class="t" id="t28" style="left:332.21px;top:342.00px;font-size:19.5px;transform:scaleX(0.9763);">Thu</span>
<span class="t" id="t29" style="left:399.58px;top:342.00px;font-size:19.5px;transform:scaleX(0.9495);">Fri</span>
<span class="t" id="t30" style="left:458.55px;top:342.00px;font-size:19.5px;transform:scaleX(0.9382);">Sat</span>
<span class="t" id="t31" style="left:324.84px;top:377.00px;font-size:19.1px;transform:scaleX(0.9);">1</span>
<span class="t" id="t32" style="left:384.92px;top:377.00px;font-size:19.1px;transform:scaleX(0.9773);">2</span>
<span class="t" id="t33" style="left:447.14px;top:377.00px;font-size:19.1px;transform:scaleX(0.9451);">3</span>
<span class="t" id="t34" style="left:75.45px;top:414.00px;font-size:19.1px;transform:scaleX(0.8866);">4</span>
<span class="t" id="t35" style="left:137.15px;top:414.00px;font-size:19.1px;transform:scaleX(0.9348);">5</span>
<span class="t" id="t36" style="left:198.93px;top:414.00px;font-size:19.1px;transform:scaleX(0.9663);">6</span>
<span class="t" id="t37" style="left:260.92px;top:414.00px;font-size:19.1px;transform:scaleX(0.9773);">7</span>
<span class="t" id="t38" style="left:323.04px;top:414.00px;font-size:19.1px;transform:scaleX(0.9556);">8</span>
<span class="t" id="t39" style="left:385.04px;top:414.00px;font-size:19.1px;transform:scaleX(0.9556);">9</span>
<span class="t" id="t40" style="left:447.22px;top:414.00px;font-size:19.1px;transform:scaleX(0.9884);">10</span>
<span class="t" id="t41" style="left:74.92px;top:450.00px;font-size:19.1px;transform:scaleX(0.9883);">11</span>
<span class="t" id="t42" style="left:137.20px;top:450.00px;font-size:19.1px;transform:scaleX(0.9988);">12</span>
<span class="t" id="t43" style="left:199.21px;top:450.00px;font-size:19.1px;transform:scaleX(0.9936);">13</span>
<span class="t" id="t44" style="left:261.23px;top:450.00px;font-size:19.1px;transform:scaleX(0.9781);">14</span>
<span class="t" id="t45" style="left:323.22px;top:450.00px;font-size:19.1px;transform:scaleX(0.9884);">15</span>
<span class="t" id="t46" style="left:385.21px;top:450.00px;font-size:19.1px;transform:scaleX(0.9936);">16</span>
<span class="t" id="t47" style="left:447.20px;top:450.00px;font-size:19.1px;transform:scaleX(0.9988);">17</span>
<span class="t" id="t48" style="left:75.21px;top:486.00px;font-size:19.1px;transform:scaleX(0.9936);">18</span>
<span class="t" id="t49" style="left:137.21px;top:486.00px;font-size:19.1px;transform:scaleX(0.9936);">19</span>
<span class="t" id="t50" style="left:198.98px;top:486.00px;font-size:19.1px;transform:scaleX(1.0243);">20</span>
<span class="t" id="t51" style="left:261.09px;top:486.00px;font-size:19.1px;transform:scaleX(0.8959);">21</span>
<span class="t" id="t52" style="left:322.97px;top:486.00px;font-size:19.1px;transform:scaleX(1.0349);">22</span>
<span class="t" id="t53" style="left:384.97px;top:486.00px;font-size:19.1px;transform:scaleX(1.0296);">23</span>
<span class="t" id="t54" style="left:446.99px;top:486.00px;font-size:19.1px;transform:scaleX(1.014);">24</span>
<span class="t" id="t55" style="left:74.98px;top:522.00px;font-size:19.1px;transform:scaleX(1.0243);">25</span>
<span class="t" id="t56" style="left:136.97px;top:522.00px;font-size:19.1px;transform:scaleX(1.0296);">26</span>
<span class="t" id="t57" style="left:198.97px;top:522.00px;font-size:19.1px;transform:scaleX(1.0349);">27</span>
<span class="t" id="t58" style="left:260.97px;top:522.00px;font-size:19.1px;transform:scaleX(1.0296);">28</span>
<span class="t" id="t59" style="left:322.97px;top:522.00px;font-size:19.1px;transform:scaleX(1.0296);">29</span>
<span class="t" id="t60" style="left:385.19px;top:522.00px;font-size:19.1px;transform:scaleX(1.014);">30</span>
<span class="t" id="t61" style="left:447.28px;top:522.00px;font-size:19.1px;transform:scaleX(0.8867);">31</span>
<span class="t" id="t62" style="left:74.97px;top:377.00px;font-size:19.1px;transform:scaleX(1.0349);color:#f0f0f0;">27</span>
<span class="t" id="t63" style="left:136.97px;top:377.00px;font-size:19.1px;transform:scaleX(1.0296);color:#f0f0f0;">28</span>
<span class="t" id="t64" style="left:198.97px;top:377.00px;font-size:19.1px;transform:scaleX(1.0296);color:#f0f0f0;">29</span>
<span class="t" id="t65" style="left:261.19px;top:377.00px;font-size:19.1px;transform:scaleX(1.014);color:#f0f0f0;">30</span>
<span class="t" id="t66" style="left:76.84px;top:558.00px;font-size:19.1px;transform:scaleX(0.9);color:#f0f0f0;">1</span>
<span class="t" id="t67" style="left:136.92px;top:558.00px;font-size:19.1px;transform:scaleX(0.9773);color:#f0f0f0;">2</span>
<span class="t" id="t68" style="left:199.14px;top:558.00px;font-size:19.1px;transform:scaleX(0.9451);color:#f0f0f0;">3</span>
<span class="t" id="t69" style="left:261.44px;top:558.00px;font-size:19.1px;transform:scaleX(0.8866);color:#f0f0f0;">4</span>
<span class="t" id="t70" style="left:323.15px;top:558.00px;font-size:19.1px;transform:scaleX(0.9348);color:#f0f0f0;">5</span>
<span class="t" id="t71" style="left:384.93px;top:558.00px;font-size:19.1px;transform:scaleX(0.9663);color:#f0f0f0;">6</span>
<span class="t" id="t72" style="left:446.92px;top:558.00px;font-size:19.1px;transform:scaleX(0.9773);color:#f0f0f0;">7</span>
<span class="t" id="t73" style="left:103.07px;top:604.00px;font-size:22.4px;transform:scaleX(1.025);letter-spacing:-0.090px;">(Click a</span>
<span class="t" id="t74" style="left:110.43px;top:629.00px;font-size:22.4px;transform:scaleX(1.025);letter-spacing:0.245px;">day to</span>
<span class="t" id="t75" style="left:90.38px;top:656.00px;font-size:22.4px;transform:scaleX(1.025);letter-spacing:0.329px;">change it)</span>
<span class="t" id="t76" style="left:273.75px;top:604.00px;font-size:22.4px;transform:scaleX(1.025);letter-spacing:0.362px;">Default</span>
<span class="t" id="t77" style="left:274.80px;top:629.00px;font-size:22.4px;transform:scaleX(1.025);">Added</span>
<span class="t" id="t78" style="left:274.57px;top:656.00px;font-size:22.4px;transform:scaleX(1.025);letter-spacing:0.219px;">Skipped</span>
<span class="t" id="t79" style="left:401.65px;top:631.00px;font-size:22.4px;transform:scaleX(1.025);letter-spacing:-0.319px;">Reset</span>
<span class="t" id="t80" style="left:582.58px;top:306.00px;font-size:22.4px;transform:scaleX(1.025);letter-spacing:-0.944px;">Sun</span>
<span class="t" id="t81" style="left:671.75px;top:306.00px;font-size:22.4px;transform:scaleX(1.025);letter-spacing:0.279px;">Mon</span>
<span class="t" id="t82" style="left:770.59px;top:306.00px;font-size:22.4px;transform:scaleX(1.025);letter-spacing:-1.082px;">Tue</span>
<span class="t" id="t83" style="left:863.20px;top:306.00px;font-size:22.4px;transform:scaleX(1.025);letter-spacing:-0.489px;">Wed</span>
<span class="t" id="t84" style="left:961.09px;top:306.00px;font-size:22.4px;transform:scaleX(1.025);letter-spacing:-0.272px;">Thu</span>
<span class="t" id="t85" style="left:1055.76px;top:306.00px;font-size:22.4px;transform:scaleX(1.025);letter-spacing:0.189px;">Fri</span>
<span class="t" id="t86" style="left:1137.58px;top:306.00px;font-size:22.4px;transform:scaleX(1.025);letter-spacing:-0.298px;">Sat</span>
<span class="t" id="t87" style="left:581.75px;top:364.00px;font-size:22.4px;transform:scaleX(1.025);letter-spacing:0.083px;">First</span>
<span class="t" id="t88" style="left:704.58px;top:364.00px;font-size:22.4px;transform:scaleX(1.025);letter-spacing:-0.089px;">Second</span>
<span class="t" id="t89" style="left:857.79px;top:364.00px;font-size:22.4px;transform:scaleX(1.025);letter-spacing:-0.026px;">Third</span>
<span class="t" id="t90" style="left:985.46px;top:364.00px;font-size:22.4px;transform:scaleX(1.025);letter-spacing:0.542px;">Fourth</span>
<span class="t" id="t91" style="left:1127.16px;top:364.00px;font-size:22.4px;transform:scaleX(1.025);letter-spacing:0.284px;">Last</span>
<span class="t" id="t92" style="left:583.29px;top:423.00px;font-size:22.4px;transform:scaleX(1.025);letter-spacing:-0.142px;">January</span>
<span class="t" id="t93" style="left:581.75px;top:465.00px;font-size:22.4px;transform:scaleX(1.025);letter-spacing:-0.004px;">February</span>
<span class="t" id="t94" style="left:581.75px;top:507.00px;font-size:22.4px;transform:scaleX(1.025);letter-spacing:0.353px;">March</span>
<span class="t" id="t95" style="left:582.80px;top:549.00px;font-size:22.4px;transform:scaleX(1.025);letter-spacing:0.264px;">April</span>
<span class="t" id="t96" style="left:757.75px;top:423.00px;font-size:22.4px;transform:scaleX(1.025);letter-spacing:-0.746px;">May</span>
<span class="t" id="t97" style="left:759.29px;top:465.00px;font-size:22.4px;transform:scaleX(1.025);letter-spacing:-0.325px;">June</span>
<span class="t" id="t98" style="left:759.29px;top:507.00px;font-size:22.4px;transform:scaleX(1.025);letter-spacing:-0.333px;">July</span>
<span class="t" id="t99" style="left:758.80px;top:549.00px;font-size:22.4px;transform:scaleX(1.025);letter-spacing:-0.167px;">August</span>
<span class="t" id="t100" style="left:900.18px;top:423.00px;font-size:22.4px;transform:scaleX(1.025);letter-spacing:0.242px;">September</span>
<span class="t" id="t101" style="left:900.18px;top:465.00px;font-size:22.4px;transform:scaleX(1.025);letter-spacing:0.459px;">October</span>
<span class="t" id="t102" style="left:899.36px;top:507.00px;font-size:22.4px;transform:scaleX(1.025);letter-spacing:0.224px;">November</span>
<span class="t" id="t103" style="left:899.36px;top:549.00px;font-size:22.4px;transform:scaleX(1.025);letter-spacing:0.307px;">December</span>
<span class="t" id="t104" style="left:1072.20px;top:503.00px;font-size:22.4px;transform:scaleX(1.025);letter-spacing:0.242px;">All Months</span>
<span class="t" id="t105" style="left:1069.36px;top:545.00px;font-size:22.4px;transform:scaleX(1.025);letter-spacing:0.444px;">No Months</span>
<span class="t" id="t106" style="left:615.96px;top:651.00px;font-size:22.4px;transform:scaleX(1.025);letter-spacing:-0.105px;">Never</span>
<span class="t" id="t107" style="left:774.28px;top:651.00px;font-size:22.4px;transform:scaleX(1.025);letter-spacing:0.367px;">On this date:</span>
<span class="t" id="t108" style="left:130.00px;top:958.00px;font-size:22.4px;transform:scaleX(1.025);letter-spacing:-0.176px;">Revert</span>
<span class="t" id="t109" style="left:912.37px;top:958.00px;font-size:22.4px;transform:scaleX(1.025);letter-spacing:0.053px;">Cancel</span>
<span class="t" id="t110" style="left:1114.28px;top:958.00px;font-size:22.4px;transform:scaleX(1.025);letter-spacing:-0.854px;color:#fff;-webkit-text-stroke:0.55px #fff;">Save</span>
</div>
</div>
</body></html>
